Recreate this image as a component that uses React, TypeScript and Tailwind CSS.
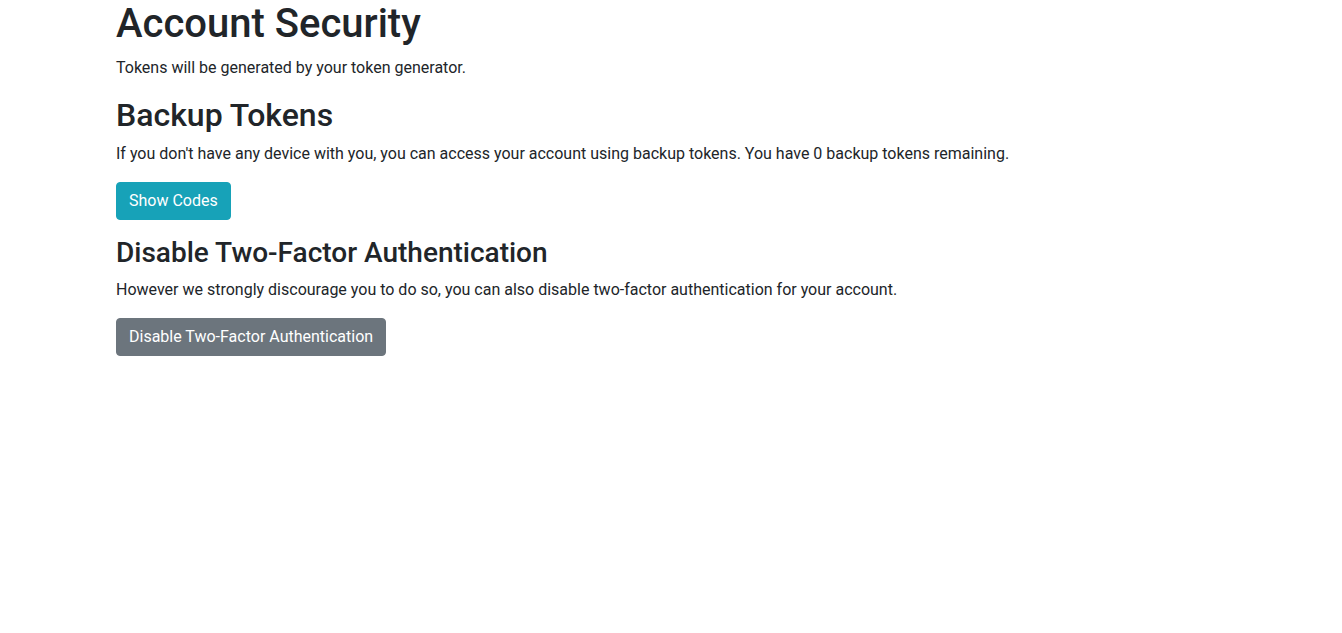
export default function App() {
  return (
    <div className="min-h-[633px] bg-white text-[#212529]" style={{ fontFamily: 'Roboto, "Liberation Sans", sans-serif' }}>
      <div className="mx-auto w-[1140px] px-[15px]">
        <h1 className="text-[40px] leading-[48px] font-medium mb-2">Account Security</h1>
        <p className="text-base leading-6 mb-4">Tokens will be generated by your token generator.</p>
        <h2 className="text-[32px] leading-[38.4px] font-medium mb-2">Backup Tokens</h2>
        <p className="text-base leading-6 mb-4">
          If you don't have any device with you, you can access your account using backup tokens. You have 0 backup tokens remaining.
        </p>
        <div className="mb-4">
          <button className="bg-[#17a2b8] border border-[#17a2b8] text-white text-base leading-6 px-3 py-[6px] rounded">Show Codes</button>
        </div>
        <h3 className="text-[28px] leading-[33.6px] font-medium mb-2">Disable Two-Factor Authentication</h3>
        <p className="text-base leading-6 mb-4">
          However we strongly discourage you to do so, you can also disable two-factor authentication for your account.
        </p>
        <button className="bg-[#6c757d] border border-[#6c757d] text-white text-base leading-6 px-3 py-[6px] rounded">
          Disable Two-Factor Authentication
        </button>
      </div>
    </div>
  );
}
